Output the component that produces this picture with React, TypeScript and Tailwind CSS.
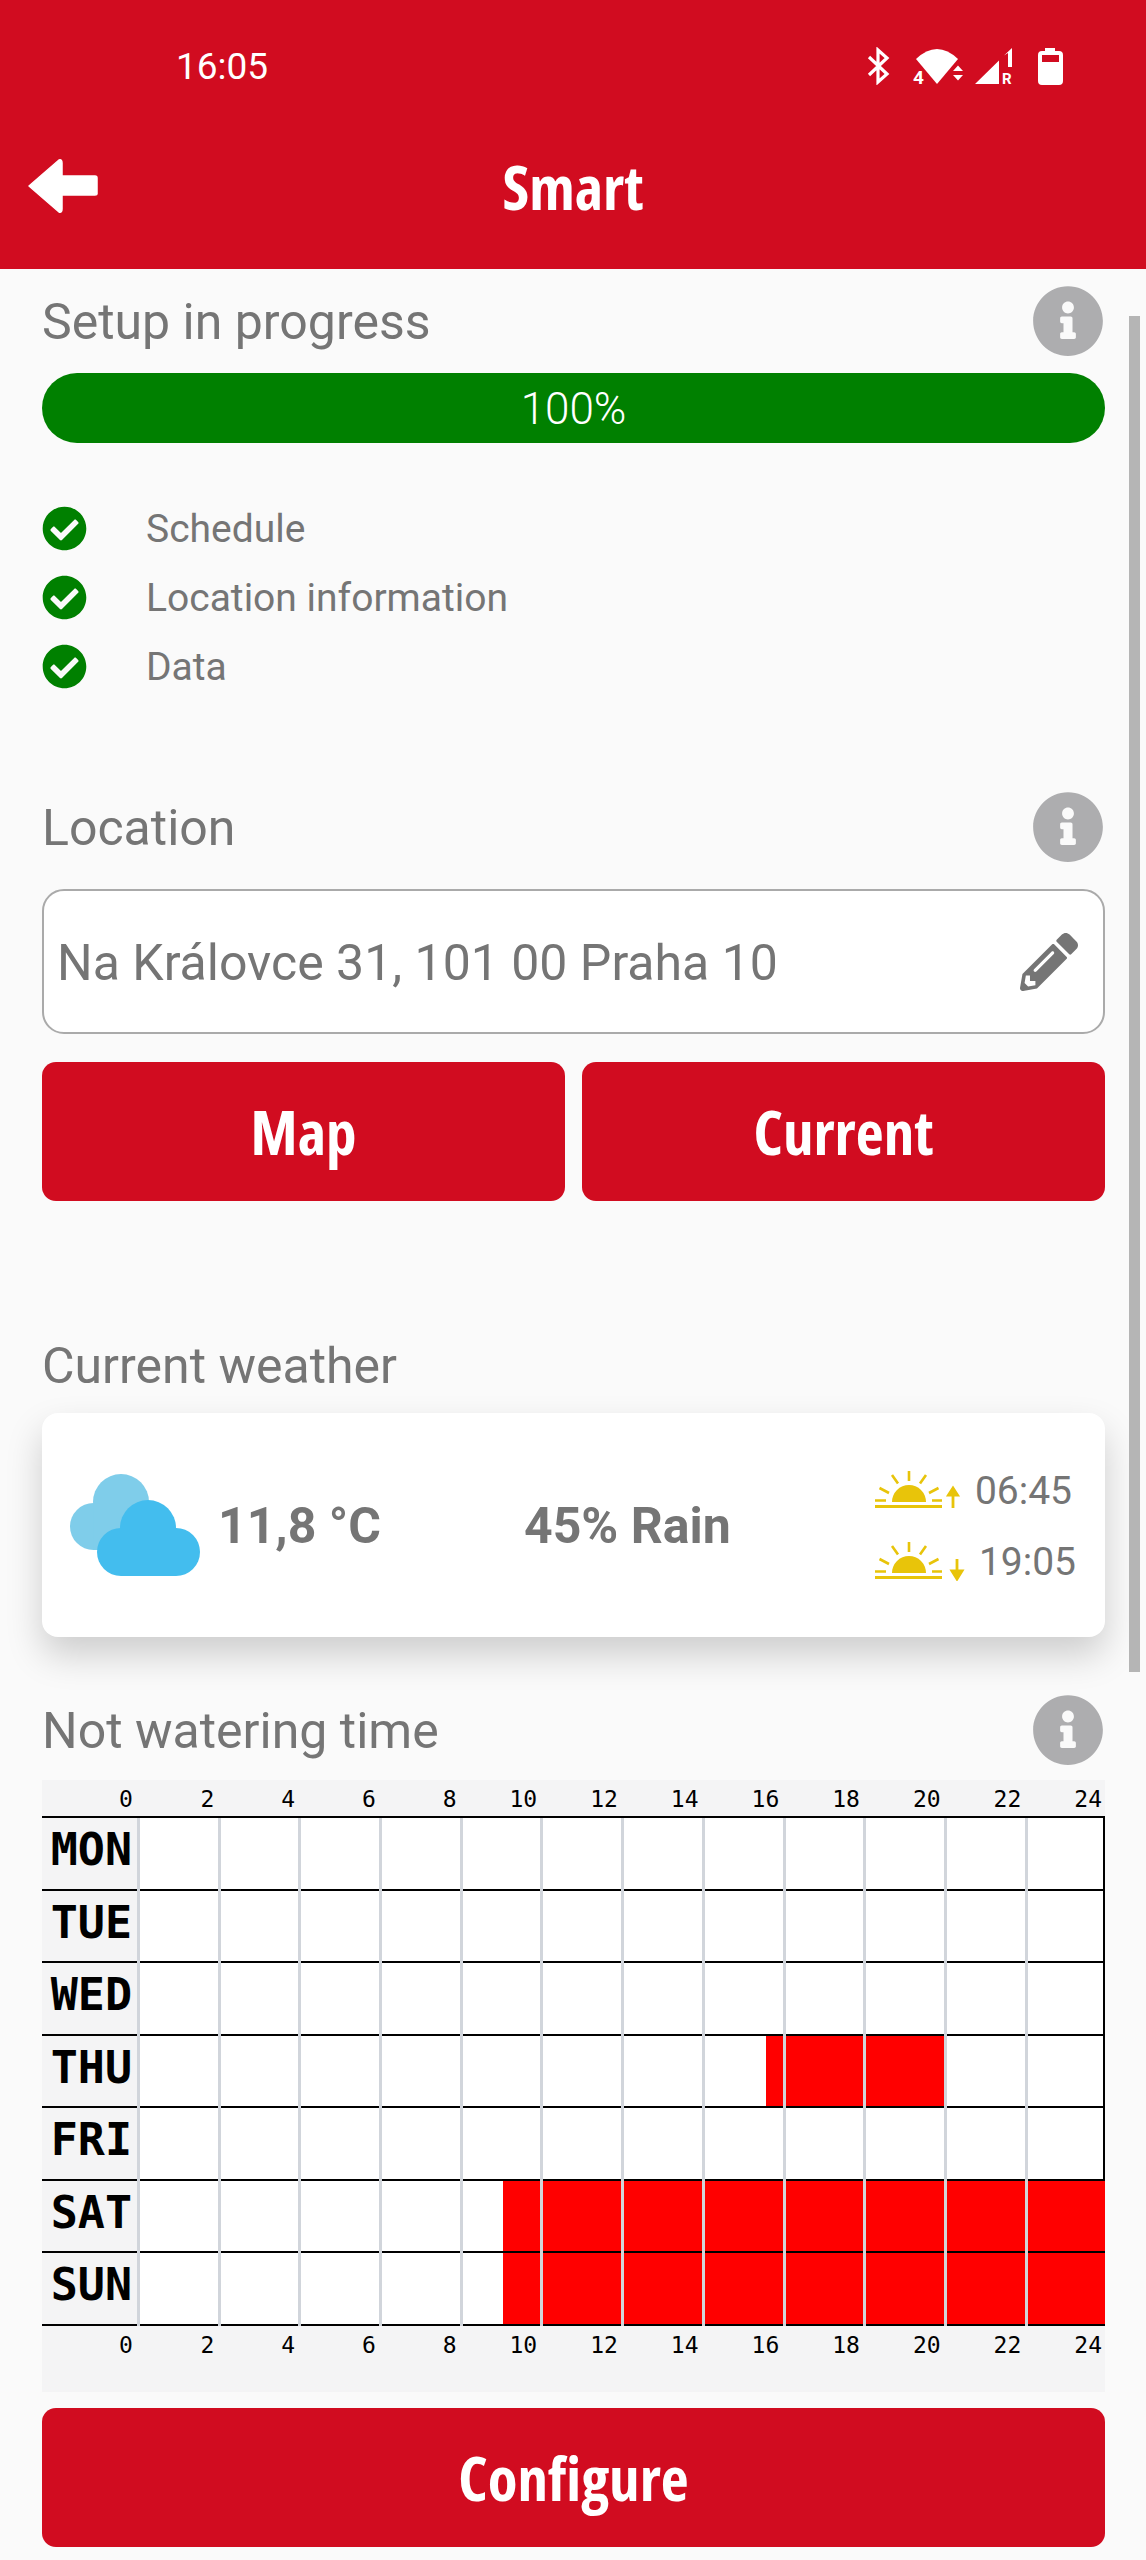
import React from "react";
import { FaCheckCircle, FaInfoCircle, FaPencilAlt } from "react-icons/fa";

const days = ["MON", "TUE", "WED", "THU", "FRI", "SAT", "SUN"];
const hours = [2, 4, 6, 8, 10, 12, 14, 16, 18, 20, 22, 24];

function SectionTitle({ title, info }: { title: string; info?: boolean }) {
  return (
    <div className="flex h-[70px] items-center justify-between">
      <span className="pt-[2px] text-[50px] leading-none text-[#757575]">{title}</span>
      {info && <FaInfoCircle className="mr-[1px] text-[#adadaf]" size={72} />}
    </div>
  );
}

function RedButton({ label, className }: { label: string; className?: string }) {
  return (
    <button
      className={`flex h-[139px] items-center justify-center rounded-[14px] bg-[#d10c20] font-['Open_Sans'] text-[61px] font-bold text-white [font-stretch:75%] ${className ?? ""}`}
    >
      {label}
    </button>
  );
}

function Check({ label }: { label: string }) {
  return (
    <div className="flex h-[44px] items-center">
      <FaCheckCircle className="text-[#008000]" size={45} />
      <span className="ml-[59px] pt-[2px] text-[39px] text-[#757575]">{label}</span>
    </div>
  );
}

function Sun({ up }: { up: boolean }) {
  const c = "#e8c40a";
  return (
    <svg width="92" height="40" viewBox="0 0 92 40">
      <path d="M17 32 a17 17 0 0 1 34 0 Z" fill={c} />
      <rect x="0" y="35" width="67" height="3" fill={c} />
      <g stroke={c} strokeWidth="2.6" fill="none">
        <path d="M0 30.5H11M57 30.5H67" />
        <path d="M34 1V11M17 5L23 13.5M51 5L45 13.5M4.500 18L14 23M63.500 18L54 23" />
      </g>
      {up ? (
        <path d="M78 38V21M73.500 25L78 18L82.500 25Z" stroke={c} strokeWidth="2.800" fill={c} />
      ) : (
        <path d="M82 18V35M77 30L82 38L87 30Z" stroke={c} strokeWidth="2.800" fill={c} />
      )}
    </svg>
  );
}

function Cloud() {
  return (
    <svg width="130" height="102" viewBox="0 0 130 102">
      <g fill="#7fcdea">
        <circle cx="51" cy="28" r="28" />
        <circle cx="23.500" cy="52.500" r="23.500" />
        <rect x="23.500" y="30" width="50" height="46" />
      </g>
      <g fill="#43bdee">
        <circle cx="78" cy="54" r="28" />
        <circle cx="51" cy="78" r="24" />
        <circle cx="106" cy="78" r="24" />
        <rect x="51" y="54" width="55" height="48" />
      </g>
    </svg>
  );
}

function StatusIcons() {
  return (
    <div className="flex items-center">
      <svg width="24" height="38" viewBox="0 0 24 38">
        <path d="M2 10L20 27L11 35V3L20 11L2 28" fill="none" stroke="white" strokeWidth="3.200" />
      </svg>
      <svg width="52" height="38" viewBox="0 0 52 38" className="ml-[22px] overflow-visible">
        <path d="M3 12Q24 -8 45 12L24 37Z" fill="white" />
        <text x="0" y="37" fontSize="19" fontWeight="700" fill="white" fontFamily="Roboto, sans-serif">4</text>
        <path d="M40 24L45 18.500L50 24ZM40 28L45 33.500L50 28Z" fill="white" />
      </svg>
      <svg width="40" height="38" viewBox="0 0 40 38" className="ml-[10px] overflow-visible">
        <path d="M0 37L24 13.500V37ZM29 8.500L37 1V20H33V6Z" fill="white" />
        <text x="27" y="37" fontSize="15" fontWeight="700" fill="white" fontFamily="Roboto, sans-serif">R</text>
      </svg>
      <svg width="25" height="37" viewBox="0 0 25 37" className="ml-[23px] mr-[83px]">
        <path d="M7 0H17V3H21Q25 3 25 7V33Q25 37 21 37H4Q0 37 0 33V7Q0 3 4 3H7Z" fill="white" />
        <rect x="4" y="7" width="17" height="7" fill="#d10c20" />
      </svg>
    </div>
  );
}

function BackArrow() {
  return (
    <svg width="72" height="54" viewBox="0 0 72 54" className="ml-[27px]">
      <path
        d="M2 27L32 1Q35 0 35 4V17H68Q70 17 70 19V35Q70 36 68 36H35V50Q35 54 32 53Z"
        fill="white"
        stroke="white"
        strokeWidth="1.500"
        strokeLinejoin="round"
      />
    </svg>
  );
}

function Chart() {
  const labels = (
    <>
      <span className="w-[96px] pr-[4px] text-right">0</span>
      <div className="grid flex-1 grid-cols-[repeat(12,80.7px)]">
        {hours.map((h) => (
          <span key={h} className="pr-[3px] text-right">
            {h}
          </span>
        ))}
      </div>
    </>
  );
  return (
    <div className="mt-[15px] h-[612px] bg-[#f4f4f5] font-['DejaVu_Sans_Mono'] text-black">
      <div className="flex h-[36px] items-center pt-[2px] text-[23px] leading-none">{labels}</div>
      <div className="relative border-t-[2px] border-black">
        {days.map((d) => (
          <div key={d} className="flex h-[72.5px] border-b-[2px] border-black">
            <span className="w-[96px] pr-[6px] text-right text-[45px] font-bold leading-[64px]">{d}</span>
            <div className="relative flex-1 border-r-[2px] border-black bg-white">
              {d === "THU" && <div className="absolute inset-y-0 left-[628px] w-[180px] bg-[#ff0000]" />}
              {(d === "SAT" || d === "SUN") && (
                <div className="absolute inset-y-0 left-[365px] right-[-2px] bg-[#ff0000]" />
              )}
            </div>
          </div>
        ))}
        <div className="absolute inset-y-0 left-[95px] grid grid-cols-[repeat(12,80.7px)]">
          {hours.map((h) => (
            <div key={h} className="border-l-[3px] border-[#d1d5db]" />
          ))}
        </div>
      </div>
      <div className="flex pt-[6px] text-[23px] leading-[27px]">{labels}</div>
    </div>
  );
}

export default function App() {
  return (
    <div className="relative h-[2560px] w-[1146px] overflow-hidden bg-[#fafafa] font-['Roboto',sans-serif]">
      <header className="h-[269px] bg-[#d10c20] text-white">
        <div className="flex h-[132px] items-center justify-between pl-[176px]">
          <span className="pt-[1px] text-[37px]">16:05</span>
          <StatusIcons />
        </div>
        <div className="grid h-[108px] grid-cols-[1fr_auto_1fr] items-center">
          <BackArrow />
          <span className="font-['Open_Sans'] text-[61px] font-bold leading-none [font-stretch:75%]">Smart</span>
          <span />
        </div>
      </header>

      <main className="px-[42px] pr-[41px] pt-[17px]">
        <SectionTitle title="Setup in progress" info />
        <div className="mt-[17px] flex h-[70px] items-center justify-center rounded-full bg-[#008000] pt-[2px] text-[44px] font-light text-white">
          100%
        </div>
        <div className="mt-[63px] flex flex-col gap-[25px]">
          <Check label="Schedule" />
          <Check label="Location information" />
          <Check label="Data" />
        </div>

        <div className="mt-[104px]">
          <SectionTitle title="Location" info />
        </div>
        <div className="mt-[27px] flex h-[145px] items-center justify-between rounded-[22px] border-[2px] border-[#aaaaaa] bg-white pl-[13px] pr-[25px]">
          <span className="pt-[3px] text-[50px] text-[#757575]">Na Královce 31, 101 00 Praha 10</span>
          <FaPencilAlt className="text-[#757575]" size={58} />
        </div>
        <div className="mt-[28px] grid grid-cols-2 gap-[17px]">
          <RedButton label="Map" />
          <RedButton label="Current" />
        </div>

        <div className="mt-[129px]">
          <SectionTitle title="Current weather" />
        </div>
        <div className="mt-[13px] flex h-[224px] items-center rounded-[16px] bg-white pl-[28px] pr-[29px] shadow-[0_18px_36px_rgba(0,0,0,0.18)]">
          <Cloud />
          <span className="ml-[18px] w-[306px] pt-[2px] text-[50px] font-bold text-[#757575]">11,8 °C</span>
          <span className="pt-[2px] text-[50px] font-bold text-[#757575]">45% Rain</span>
          <div className="ml-auto flex flex-col gap-[27px] text-[39px] leading-[42px] text-[#757575]">
            <div className="flex items-center">
              <Sun up />
              <span className="ml-[8px] pt-[2px]">06:45</span>
            </div>
            <div className="flex items-center">
              <Sun up={false} />
              <span className="ml-[12px] pt-[2px]">19:05</span>
            </div>
          </div>
        </div>

        <div className="mt-[58px]">
          <SectionTitle title="Not watering time" info />
        </div>
        <Chart />

        <RedButton label="Configure" className="mt-[16px] w-full" />
      </main>

      <div className="absolute right-[6px] top-[316px] h-[1356px] w-[11px] bg-[#b5b5b5]" />
    </div>
  );
}
